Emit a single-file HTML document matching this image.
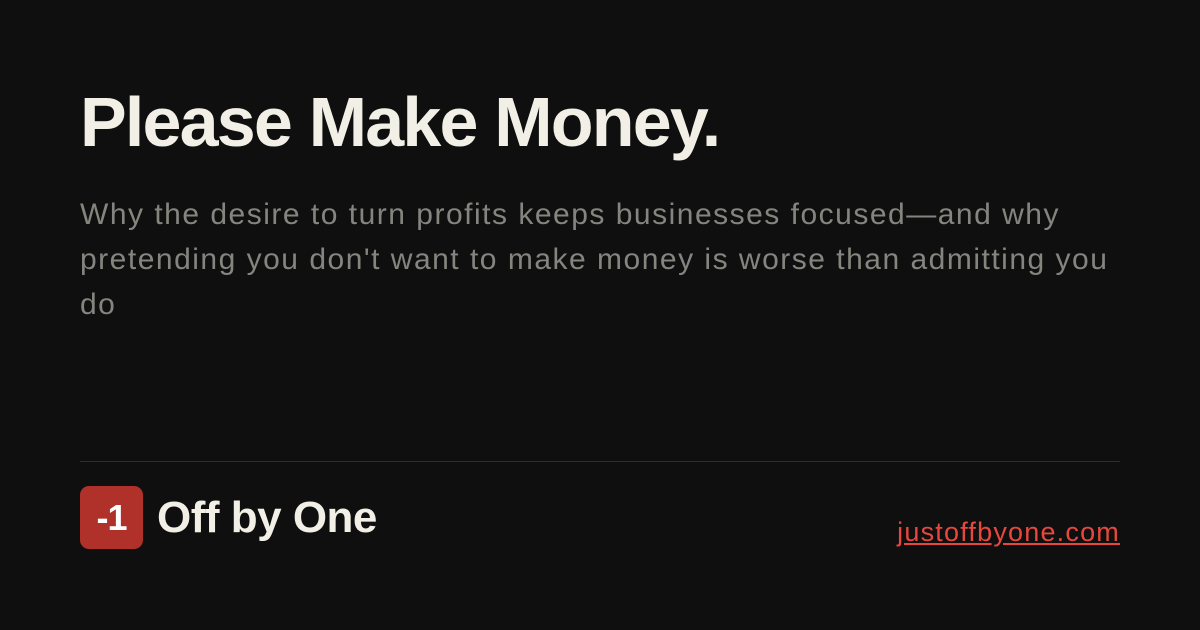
<!DOCTYPE html>
<html><head><meta charset="utf-8"><style>
body{margin:0;width:1200px;height:630px;background:#0f0f0f;overflow:hidden;font-family:"Liberation Sans",sans-serif;position:relative}
.t{position:absolute;left:80px;top:82px;font-size:70px;font-weight:bold;color:#f2f0e6;letter-spacing:-1.8px;white-space:nowrap}
.s{position:absolute;left:80px;top:192px;font-size:30px;line-height:45px;color:#85857f;white-space:nowrap;letter-spacing:1.5px}
.hr{position:absolute;left:80px;top:461px;width:1040px;height:1px;background:#2e2e2e}
.b{position:absolute;left:80px;top:486px;width:63px;height:63px;border-radius:9px;background:#b0302a;color:#fff;font-weight:bold;font-size:36px;line-height:63px;text-align:center;letter-spacing:-1px}
.n{position:absolute;left:157px;top:493px;font-size:44px;font-weight:bold;color:#f2f0e6;letter-spacing:-0.5px;white-space:nowrap}
.l{position:absolute;right:80px;top:517px;font-size:27px;color:#e8473d;text-decoration:underline;white-space:nowrap;letter-spacing:1.2px}
</style></head><body>
<div class="t">Please Make Money.</div>
<div class="s">Why the desire to turn profits keeps businesses focused—and why<br>pretending you don't want to make money is worse than admitting you<br>do</div>
<div class="hr"></div>
<div class="b">-1</div>
<div class="n">Off by One</div>
<div class="l">justoffbyone.com</div>
</body></html>
